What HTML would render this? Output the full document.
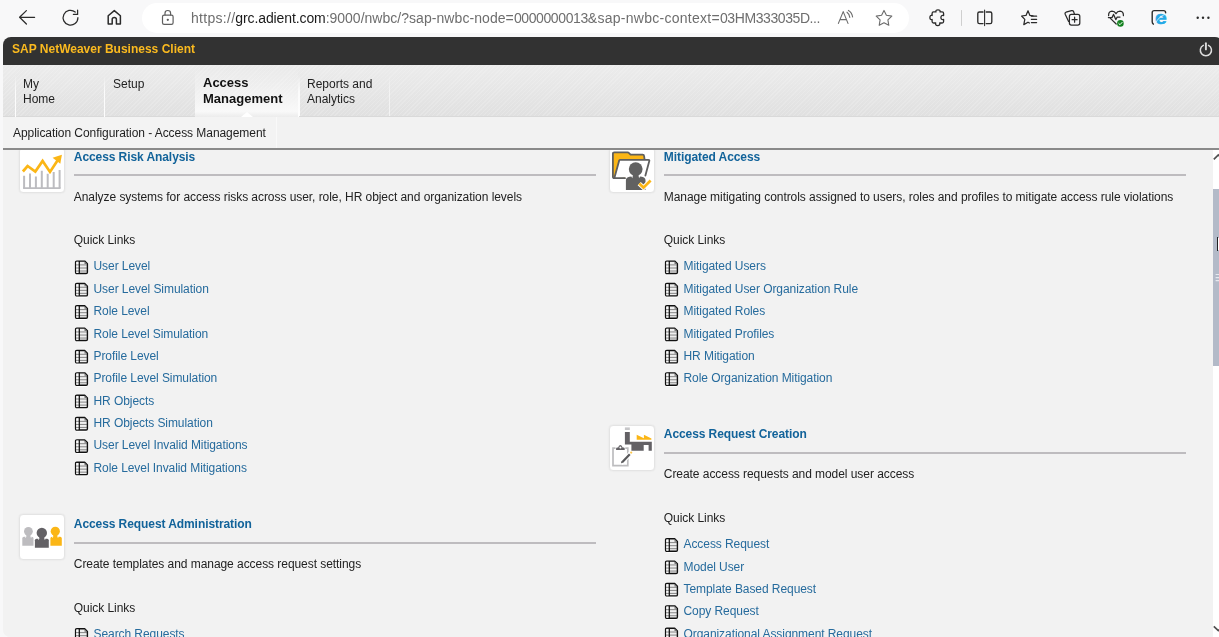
<!DOCTYPE html>
<html lang="en">
<head>
<meta charset="utf-8">
<title>SAP NetWeaver Business Client</title>
<style>
*{box-sizing:border-box;margin:0;padding:0}
html,body{width:1219px;height:637px;overflow:hidden}
body{-webkit-font-smoothing:antialiased;background:#f8f8f9;font-family:"Liberation Sans",Arial,sans-serif;font-size:12px;color:#222;position:relative}
.abs{position:absolute}
/* browser chrome */
#chrome{position:absolute;left:0;top:0;width:1219px;height:37px;background:#f8f8f9}
#pill{position:absolute;left:142px;top:3px;width:767px;height:30px;border-radius:15px;background:#fff}
#url{will-change:transform;position:absolute;left:190.9px;top:8.6px;font-size:14px;line-height:18px;color:#6e6e6e;white-space:nowrap;letter-spacing:0.015px}
#url b{font-weight:normal;color:#1b1b1b}
.tb{position:absolute;fill:none;stroke:#2a2a2a;stroke-width:1.4;stroke-linecap:round;stroke-linejoin:round}
/* page */
#page{position:absolute;left:3px;top:37px;width:1220px;height:600px;background:#f2f2f2;border-radius:8px 8px 0 7px;overflow:hidden}
#shell{position:absolute;left:0;top:0;width:1220px;height:28px;background:#323232}
#shell span{will-change:transform;position:absolute;left:9px;top:5px;font-weight:bold;font-size:12px;line-height:14px;color:#fbba1f;white-space:nowrap}
#tabs{position:absolute;left:0;top:28px;width:1220px;height:52px;background-color:#e6e6e6;
 background-image:repeating-linear-gradient(135deg,rgba(255,255,255,.16) 0,rgba(255,255,255,.16) 1px,rgba(255,255,255,0) 1px,rgba(255,255,255,0) 3px),linear-gradient(#ececec,#e0e0e0)}
.sep{position:absolute;top:10px;width:1px;height:42px;background:linear-gradient(rgba(255,255,255,0),rgba(255,255,255,.85) 40%,rgba(255,255,255,.95))}
.tab{will-change:transform;position:absolute;font-size:12px;line-height:14.6px;color:#222;white-space:nowrap}
#seltab{position:absolute;left:192px;top:4px;width:103px;height:48px;background:linear-gradient(rgba(255,255,255,0) 0,rgba(255,255,255,.45) 50%,#f9f9f9 88%,#ececec 100%)}
#notch{position:absolute;left:238px;top:47px;width:0;height:0;border-left:6px solid transparent;border-right:6px solid transparent;border-bottom:5px solid #fff}
#tabs:after{content:'';position:absolute;left:296px;right:0;bottom:0;height:1px;background:#d9d9d9}
#tabs:before{content:'';position:absolute;left:0;width:192px;bottom:0;height:1px;background:#d9d9d9}
#crumb{position:absolute;left:0;top:80px;width:1220px;height:31px;background:#f2f2f2}
#crumb .c{position:absolute;left:0;top:0;width:274px;height:31px;background:#f3f3f3;border-right:1px solid #f9f9f9}
#crumb span{will-change:transform;position:absolute;left:10px;top:9px;line-height:14px;white-space:nowrap;color:#1e1e1e;letter-spacing:-0.06px}
#rule{position:absolute;left:0;top:111px;width:1220px;height:2px;background:#8a8a8a}
#content{position:absolute;left:0;top:113px;width:1210px;height:487px;overflow:hidden;will-change:transform}
.ico{position:absolute;width:46px;height:46px;background:#fff;border:1px solid #e4e4e4;border-radius:4px;box-shadow:0 0 2px rgba(0,0,0,.08)}
.h{position:absolute;letter-spacing:-0.08px;font-weight:bold;font-size:12px;line-height:14px;color:#12639a;white-space:nowrap}
.hr{position:absolute;height:2px;background:#bebcbf;width:522px}
.d{position:absolute;letter-spacing:-0.055px;font-size:12px;line-height:14px;color:#222;white-space:nowrap}
.l{position:absolute;letter-spacing:-0.07px;font-size:12px;line-height:14px;color:#266b9d;white-space:nowrap}
.li{position:absolute;width:16px;height:18px}
#sb{position:absolute;left:1210px;top:113px;width:12px;height:487px;background:#fff}
#thumb{position:absolute;left:0;top:39px;width:12px;height:177px;background:#b3bac8}
</style>
</head>
<body>
<div id="chrome">
  <div id="pill"></div>
  <svg class="abs" style="left:0;top:0" width="1219" height="37" viewBox="0 0 1219 37" fill="none" stroke="#2b2b2b" stroke-width="1.25" stroke-linecap="round" stroke-linejoin="round">
    <!-- back -->
    <path d="M34.6 17.3H19.8M26.4 10.6L19.6 17.3L26.4 24"/>
    <!-- reload -->
    <path d="M77.9 17.7A7.4 7.4 0 1 1 75.2 12"/><path d="M77.6 10.2V14.4H73.4"/>
    <!-- home -->
    <path d="M108.2 24V15.8L114.3 10.6L120.4 15.8V24H116.4V19.2Q116.4 17.4 114.3 17.4Q112.2 17.4 112.2 19.2V24Z" stroke-width="1.5"/>
    <!-- lock -->
    <g stroke="#5f5f5f" stroke-width="1.2"><rect x="162.5" y="15.2" width="10.6" height="9.2" rx="1.6"/><path d="M165 15V13.2Q165 10.5 167.8 10.5Q170.6 10.5 170.6 13.2V15"/><circle cx="167.8" cy="19.8" r=".55" fill="#5f5f5f"/></g>
    <!-- read aloud -->
    <g stroke="#6c6c6c" stroke-width="1.1"><path d="M838.4 23.4L843.2 11.6L848 23.4M840 19.6H846.4"/><path d="M847 12.2Q849.4 13.8 849.8 17.4M848.4 10.4Q852 12.4 852.6 17"/></g>
    <!-- star -->
    <path d="M884 10.4L886.4 15.3L891.8 16.1L887.9 19.9L888.8 25.3L884 22.7L879.2 25.3L880.1 19.9L876.2 16.1L881.6 15.3Z" stroke="#6c6c6c" stroke-width="1.1"/>
    <!-- extensions puzzle -->
    <path d="M933.6 11.9H936Q935.3 9.9 938 9.9Q940.7 9.9 940 11.9H942.1Q943.6 11.9 943.6 13.4V15.5Q941 14.8 940.9 17.5Q941 20.2 943.6 19.5V21.5Q943.6 23 942.1 23H939.7Q940.4 25.6 937.7 25.6Q935 25.6 935.7 23H933.6Q932.1 23 932.1 21.5V19.5Q929.9 20.2 929.9 17.5Q929.9 14.8 932.1 15.5V13.4Q932.1 11.9 933.6 11.9Z" stroke-width="1.3"/>
    <path d="M961.5 10.5V25.5" stroke="#cfcfcf" stroke-width="1"/>
    <!-- split screen -->
    <path d="M983 12H979.4Q977.8 12 977.8 13.6V22Q977.8 23.6 979.4 23.6H983M986.2 12H990.2Q991.8 12 991.8 13.6V22Q991.8 23.6 990.2 23.6H986.2" stroke-width="1.35"/><path d="M984.6 10V25.6" stroke-width="1.1"/>
    <!-- favorites -->
    <path d="M1028 10.8L1029.9 15.4L1033 15.8M1028 10.8L1026 15.4L1021.6 16L1024.8 19.4L1023.8 24.6L1028 22.2L1029.4 23"/><path d="M1031.4 16.2H1036.6M1031.4 19.4H1036.6M1031.4 22.6H1036.6"/>
    <!-- collections -->
    <path d="M1068.6 21.4L1065.2 14.2Q1064.6 12.8 1066 12.2L1071.6 10.6Q1073 10.2 1073.6 11.6L1074.4 14"/><rect x="1069.4" y="14.4" width="10.4" height="10.6" rx="2"/><path d="M1074.6 17.2V22.2M1072.1 19.7H1077.1"/>
    <!-- heart pulse -->
    <path d="M1116.2 24L1110.4 18.4M1108.6 15.6Q1108.4 11.4 1112 11.2Q1114.6 11.2 1116 13.6Q1117.4 11.2 1120 11.2Q1123.6 11.4 1123.4 15.6"/><path d="M1108.4 17.6H1112L1113.6 14.4L1115.8 19.6L1117.2 17H1120"/>
    <circle cx="1120.4" cy="23.4" r="3.3" fill="#13811f" stroke="none"/><path d="M1118.8 23.5L1120 24.7L1122.1 22.4" stroke="#fff" stroke-width="1"/>
    <!-- IE mode -->
    <path d="M1153.4 24.2Q1152.2 23.4 1152.2 21.8V12.6Q1152.2 10.6 1154.2 10.6H1163.6Q1165.6 10.6 1165.6 12.6V13" stroke-width="1.4"/><text x="1155" y="24.2" font-family="Liberation Sans,sans-serif" font-size="17.6" font-weight="bold" fill="#25a9e6" stroke="#25a9e6" stroke-width=".5" textLength="11.8" lengthAdjust="spacingAndGlyphs">e</text><path d="M1155.6 23.6Q1157.2 17.4 1166.4 13.6" stroke="#d6f0fb" stroke-width=".9"/>
    <!-- dots -->
    <g fill="#2b2b2b" stroke="none"><circle cx="1197.7" cy="17.7" r="1.2"/><circle cx="1203" cy="17.7" r="1.2"/><circle cx="1208.4" cy="17.7" r="1.2"/></g>
  </svg>

  <div id="url"><span style="letter-spacing:0.29px">https://</span><b style="letter-spacing:-0.11px">grc.adient.com</b><span style="letter-spacing:0.00px">:9000/nwbc/</span><span style="letter-spacing:0.07px">?sap-nwbc-node=</span><span style="letter-spacing:-0.39px">0000000013</span><span style="letter-spacing:0.27px">&amp;sap-nwbc-context=</span><span style="letter-spacing:-0.41px">03HM333035D...</span></div>
</div>
<div id="page">
  <div id="shell"><span>SAP NetWeaver Business Client</span>
    <svg class="abs" style="left:1194px;top:4px" width="18" height="18" viewBox="0 0 18 18" fill="none" stroke="#dcdcdc" stroke-linecap="round"><path d="M6.3 4.3A5.6 5.6 0 1 0 11.5 4.3" stroke-width="1.5"/><path d="M8.9 2.2V8.4" stroke-width="1.9"/></svg></div>
  <div id="tabs">
    <div class="sep" style="left:12px"></div>
    <div class="sep" style="left:101px"></div>
    <div id="seltab"></div>
    <div class="sep" style="left:295px;width:2px"></div>
    <div id="notch"></div>
    <div class="sep" style="left:386px;opacity:.6"></div>
    <div class="tab" style="left:20px;top:12px">My<br>Home</div>
    <div class="tab" style="left:110px;top:12px">Setup</div>
    <div class="tab" style="left:200px;top:10px;font-weight:bold;font-size:13px;line-height:16px;color:#111">Access<br>Management</div>
    <div class="tab" style="left:304px;top:12px">Reports and<br>Analytics</div>
  </div>
  <div id="crumb"><div class="c"></div><span>Application Configuration - Access Management</span></div>
  <div id="rule"></div>
  <div id="content">
<div class="ico" style="left:16.3px;top:-3.2px"><svg class="abs" style="left:0;top:0" width="44" height="44" viewBox="1 1 44 44"><g stroke="#bcbcc0" stroke-width="2" fill="none"><path d="M5.1 41V28.8M11 41V26.4M16.9 41V29.6M22.8 41V23.7M28.7 41V26.8M34.7 41V24.9M40.6 41V22.9"/><path d="M4.1 41.2H41.6" stroke-width="1.8"/></g><path d="M3.9 24.5L8.6 19L16.3 24.5L23.6 13.9L31 24.9L38.5 13.4" fill="none" stroke="#fbb616" stroke-width="2.7" stroke-linejoin="miter"/><path d="M42.9 7.8L33.6 10.8L41.3 16.8Z" fill="#fbb616"/></svg></div>
<div class="h" style="left:70.8px;top:-0.5px">Access Risk Analysis</div>
<div class="hr" style="left:70.8px;top:24.2px"></div>
<div class="d" style="left:70.8px;top:39.6px">Analyze systems for access risks across user, role, HR object and organization levels</div>
<div class="d" style="left:70.8px;top:83.3px">Quick Links</div>
<svg class="li" style="left:71px;top:109px" viewBox="-0.40 -0.90 16 18"><path d="M2 14.9H12.4" stroke="#fff" stroke-width="1"/><path d="M2.4 1.2H10.3L13 3.9V12.4Q13 13.6 11.8 13.6H2.4Q1.2 13.6 1.2 12.4V2.4Q1.2 1.2 2.4 1.2Z" fill="#efefef" stroke="#111" stroke-width="1.4" stroke-linejoin="round"/><rect x="1.9" y="1.9" width="2.4" height="11.2" fill="#fafafa"/><path d="M10.1 1.4V4.1H12.8Z" fill="#777"/><path d="M1.6 5H12.6M1.6 8.1H12.6M1.6 11.1H12.6" stroke="#4a4a4a" stroke-width=".65"/><path d="M4.9 1.2V13.6" stroke="#111" stroke-width="1.25"/></svg>
<div class="l" style="left:90.5px;top:109.4px">User Level</div>
<svg class="li" style="left:71px;top:132px" viewBox="-0.40 -0.25 16 18"><path d="M2 14.9H12.4" stroke="#fff" stroke-width="1"/><path d="M2.4 1.2H10.3L13 3.9V12.4Q13 13.6 11.8 13.6H2.4Q1.2 13.6 1.2 12.4V2.4Q1.2 1.2 2.4 1.2Z" fill="#efefef" stroke="#111" stroke-width="1.4" stroke-linejoin="round"/><rect x="1.9" y="1.9" width="2.4" height="11.2" fill="#fafafa"/><path d="M10.1 1.4V4.1H12.8Z" fill="#777"/><path d="M1.6 5H12.6M1.6 8.1H12.6M1.6 11.1H12.6" stroke="#4a4a4a" stroke-width=".65"/><path d="M4.9 1.2V13.6" stroke="#111" stroke-width="1.25"/></svg>
<div class="l" style="left:90.5px;top:131.8px">User Level Simulation</div>
<svg class="li" style="left:71px;top:154px" viewBox="-0.40 -0.60 16 18"><path d="M2 14.9H12.4" stroke="#fff" stroke-width="1"/><path d="M2.4 1.2H10.3L13 3.9V12.4Q13 13.6 11.8 13.6H2.4Q1.2 13.6 1.2 12.4V2.4Q1.2 1.2 2.4 1.2Z" fill="#efefef" stroke="#111" stroke-width="1.4" stroke-linejoin="round"/><rect x="1.9" y="1.9" width="2.4" height="11.2" fill="#fafafa"/><path d="M10.1 1.4V4.1H12.8Z" fill="#777"/><path d="M1.6 5H12.6M1.6 8.1H12.6M1.6 11.1H12.6" stroke="#4a4a4a" stroke-width=".65"/><path d="M4.9 1.2V13.6" stroke="#111" stroke-width="1.25"/></svg>
<div class="l" style="left:90.5px;top:154.1px">Role Level</div>
<svg class="li" style="left:71px;top:176px" viewBox="-0.40 -0.95 16 18"><path d="M2 14.9H12.4" stroke="#fff" stroke-width="1"/><path d="M2.4 1.2H10.3L13 3.9V12.4Q13 13.6 11.8 13.6H2.4Q1.2 13.6 1.2 12.4V2.4Q1.2 1.2 2.4 1.2Z" fill="#efefef" stroke="#111" stroke-width="1.4" stroke-linejoin="round"/><rect x="1.9" y="1.9" width="2.4" height="11.2" fill="#fafafa"/><path d="M10.1 1.4V4.1H12.8Z" fill="#777"/><path d="M1.6 5H12.6M1.6 8.1H12.6M1.6 11.1H12.6" stroke="#4a4a4a" stroke-width=".65"/><path d="M4.9 1.2V13.6" stroke="#111" stroke-width="1.25"/></svg>
<div class="l" style="left:90.5px;top:176.5px">Role Level Simulation</div>
<svg class="li" style="left:71px;top:199px" viewBox="-0.40 -0.30 16 18"><path d="M2 14.9H12.4" stroke="#fff" stroke-width="1"/><path d="M2.4 1.2H10.3L13 3.9V12.4Q13 13.6 11.8 13.6H2.4Q1.2 13.6 1.2 12.4V2.4Q1.2 1.2 2.4 1.2Z" fill="#efefef" stroke="#111" stroke-width="1.4" stroke-linejoin="round"/><rect x="1.9" y="1.9" width="2.4" height="11.2" fill="#fafafa"/><path d="M10.1 1.4V4.1H12.8Z" fill="#777"/><path d="M1.6 5H12.6M1.6 8.1H12.6M1.6 11.1H12.6" stroke="#4a4a4a" stroke-width=".65"/><path d="M4.9 1.2V13.6" stroke="#111" stroke-width="1.25"/></svg>
<div class="l" style="left:90.5px;top:198.8px">Profile Level</div>
<svg class="li" style="left:71px;top:221px" viewBox="-0.40 -0.65 16 18"><path d="M2 14.9H12.4" stroke="#fff" stroke-width="1"/><path d="M2.4 1.2H10.3L13 3.9V12.4Q13 13.6 11.8 13.6H2.4Q1.2 13.6 1.2 12.4V2.4Q1.2 1.2 2.4 1.2Z" fill="#efefef" stroke="#111" stroke-width="1.4" stroke-linejoin="round"/><rect x="1.9" y="1.9" width="2.4" height="11.2" fill="#fafafa"/><path d="M10.1 1.4V4.1H12.8Z" fill="#777"/><path d="M1.6 5H12.6M1.6 8.1H12.6M1.6 11.1H12.6" stroke="#4a4a4a" stroke-width=".65"/><path d="M4.9 1.2V13.6" stroke="#111" stroke-width="1.25"/></svg>
<div class="l" style="left:90.5px;top:221.2px">Profile Level Simulation</div>
<svg class="li" style="left:71px;top:244px" viewBox="-0.40 -0.00 16 18"><path d="M2 14.9H12.4" stroke="#fff" stroke-width="1"/><path d="M2.4 1.2H10.3L13 3.9V12.4Q13 13.6 11.8 13.6H2.4Q1.2 13.6 1.2 12.4V2.4Q1.2 1.2 2.4 1.2Z" fill="#efefef" stroke="#111" stroke-width="1.4" stroke-linejoin="round"/><rect x="1.9" y="1.9" width="2.4" height="11.2" fill="#fafafa"/><path d="M10.1 1.4V4.1H12.8Z" fill="#777"/><path d="M1.6 5H12.6M1.6 8.1H12.6M1.6 11.1H12.6" stroke="#4a4a4a" stroke-width=".65"/><path d="M4.9 1.2V13.6" stroke="#111" stroke-width="1.25"/></svg>
<div class="l" style="left:90.5px;top:243.5px">HR Objects</div>
<svg class="li" style="left:71px;top:266px" viewBox="-0.40 -0.35 16 18"><path d="M2 14.9H12.4" stroke="#fff" stroke-width="1"/><path d="M2.4 1.2H10.3L13 3.9V12.4Q13 13.6 11.8 13.6H2.4Q1.2 13.6 1.2 12.4V2.4Q1.2 1.2 2.4 1.2Z" fill="#efefef" stroke="#111" stroke-width="1.4" stroke-linejoin="round"/><rect x="1.9" y="1.9" width="2.4" height="11.2" fill="#fafafa"/><path d="M10.1 1.4V4.1H12.8Z" fill="#777"/><path d="M1.6 5H12.6M1.6 8.1H12.6M1.6 11.1H12.6" stroke="#4a4a4a" stroke-width=".65"/><path d="M4.9 1.2V13.6" stroke="#111" stroke-width="1.25"/></svg>
<div class="l" style="left:90.5px;top:265.9px">HR Objects Simulation</div>
<svg class="li" style="left:71px;top:288px" viewBox="-0.40 -0.70 16 18"><path d="M2 14.9H12.4" stroke="#fff" stroke-width="1"/><path d="M2.4 1.2H10.3L13 3.9V12.4Q13 13.6 11.8 13.6H2.4Q1.2 13.6 1.2 12.4V2.4Q1.2 1.2 2.4 1.2Z" fill="#efefef" stroke="#111" stroke-width="1.4" stroke-linejoin="round"/><rect x="1.9" y="1.9" width="2.4" height="11.2" fill="#fafafa"/><path d="M10.1 1.4V4.1H12.8Z" fill="#777"/><path d="M1.6 5H12.6M1.6 8.1H12.6M1.6 11.1H12.6" stroke="#4a4a4a" stroke-width=".65"/><path d="M4.9 1.2V13.6" stroke="#111" stroke-width="1.25"/></svg>
<div class="l" style="left:90.5px;top:288.2px">User Level Invalid Mitigations</div>
<svg class="li" style="left:71px;top:311px" viewBox="-0.40 -0.05 16 18"><path d="M2 14.9H12.4" stroke="#fff" stroke-width="1"/><path d="M2.4 1.2H10.3L13 3.9V12.4Q13 13.6 11.8 13.6H2.4Q1.2 13.6 1.2 12.4V2.4Q1.2 1.2 2.4 1.2Z" fill="#efefef" stroke="#111" stroke-width="1.4" stroke-linejoin="round"/><rect x="1.9" y="1.9" width="2.4" height="11.2" fill="#fafafa"/><path d="M10.1 1.4V4.1H12.8Z" fill="#777"/><path d="M1.6 5H12.6M1.6 8.1H12.6M1.6 11.1H12.6" stroke="#4a4a4a" stroke-width=".65"/><path d="M4.9 1.2V13.6" stroke="#111" stroke-width="1.25"/></svg>
<div class="l" style="left:90.5px;top:310.6px">Role Level Invalid Mitigations</div>
<div class="ico" style="left:16.3px;top:364.4px"><svg class="abs" style="left:0;top:0" width="44" height="44" viewBox="1 1 44 44"><g fill="#bdbcbf"><circle cx="9.4" cy="17.3" r="4.4"/><rect x="7.3" y="17.3" width="4.2" height="6.5"/><path d="M3.3 31.8V24.4Q3.3 22.8 4.9 22.8H12.9Q14.5 22.8 14.5 24.4V31.8Z"/></g><path d="M5.7 22.6H7.3L6.8 24.1ZM11.5 22.6H13.1L12.0 24.1Z" fill="#fff"/><g fill="#fbb616"><circle cx="36.3" cy="17.3" r="4.6"/><rect x="34.2" y="17.3" width="4.2" height="6.5"/><path d="M31.4 31.8V24.4Q31.4 22.8 33.0 22.8H41.2Q42.8 22.8 42.8 24.4V31.8Z"/></g><path d="M32.6 22.6H34.2L33.7 24.1ZM38.4 22.6H40.0L38.9 24.1Z" fill="#fff"/><g fill="#636165"><circle cx="22.8" cy="18.9" r="5.2"/><rect x="20.3" y="18.9" width="5.0" height="6.8"/><path d="M15.9 33.8V26.3Q15.9 24.7 17.5 24.7H28.2Q29.8 24.7 29.8 26.3V33.8Z"/></g><path d="M18.7 24.5H20.3L19.8 26.0ZM25.3 24.5H26.9L25.8 26.0Z" fill="#fff"/></svg></div>
<div class="h" style="left:70.8px;top:367.2px">Access Request Administration</div>
<div class="hr" style="left:70.8px;top:391.9px"></div>
<div class="d" style="left:70.8px;top:407.3px">Create templates and manage access request settings</div>
<div class="d" style="left:70.8px;top:451.0px">Quick Links</div>
<svg class="li" style="left:71px;top:477px" viewBox="-0.40 -0.60 16 18"><path d="M2 14.9H12.4" stroke="#fff" stroke-width="1"/><path d="M2.4 1.2H10.3L13 3.9V12.4Q13 13.6 11.8 13.6H2.4Q1.2 13.6 1.2 12.4V2.4Q1.2 1.2 2.4 1.2Z" fill="#efefef" stroke="#111" stroke-width="1.4" stroke-linejoin="round"/><rect x="1.9" y="1.9" width="2.4" height="11.2" fill="#fafafa"/><path d="M10.1 1.4V4.1H12.8Z" fill="#777"/><path d="M1.6 5H12.6M1.6 8.1H12.6M1.6 11.1H12.6" stroke="#4a4a4a" stroke-width=".65"/><path d="M4.9 1.2V13.6" stroke="#111" stroke-width="1.25"/></svg>
<div class="l" style="left:90.5px;top:477.1px">Search Requests</div>
<div class="ico" style="left:606.3px;top:-3.2px"><svg class="abs" style="left:0;top:0" width="44" height="44" viewBox="1 1 44 44"><path d="M15.3 31.2H5.4Q3.9 31.2 3.9 29.7V6.8Q3.9 5.3 5.4 5.3H18.6Q19.3 5.3 19.8 5.9L21.6 7.6H33.6Q35 7.6 35.1 9L35.6 12.7" fill="#fbb616" stroke="#5f5f5f" stroke-width="1.8" stroke-linejoin="round"/><path d="M10.4 12.9H39.4Q40.6 12.9 40.3 14L36.2 29.2L5.3 31.2Z" fill="#fff"/><path d="M16 31.2H5.3L10.2 13.6Q10.4 12.8 11.3 12.8H39.3Q40.7 12.8 40.3 14.1L36.4 28.6" fill="none" stroke="#5f5f5f" stroke-width="1.8" stroke-linejoin="round" stroke-linecap="round"/><circle cx="26.7" cy="22.1" r="6.9" fill="#616161"/><path d="M16.9 42.9V33.6Q16.9 30.2 20.5 29.8L22.4 29.6L23.3 31.2L24.2 27H29.2L30.1 31.2L31 29.6L32.9 29.8Q36.5 30.2 36.5 33.6V42.9Z" fill="#616161"/><path d="M30.2 36.6L34.5 40.6L41.6 33.5" fill="none" stroke="#fff" stroke-width="4.6"/><path d="M30.2 36.6L34.5 40.6L41.6 33.5" fill="none" stroke="#fbb616" stroke-width="2.7"/></svg></div>
<div class="h" style="left:660.8px;top:-0.5px">Mitigated Access</div>
<div class="hr" style="left:660.8px;top:24.2px"></div>
<div class="d" style="left:660.8px;top:39.6px">Manage mitigating controls assigned to users, roles and profiles to mitigate access rule violations</div>
<div class="d" style="left:660.8px;top:83.3px">Quick Links</div>
<svg class="li" style="left:661px;top:109px" viewBox="-0.40 -0.90 16 18"><path d="M2 14.9H12.4" stroke="#fff" stroke-width="1"/><path d="M2.4 1.2H10.3L13 3.9V12.4Q13 13.6 11.8 13.6H2.4Q1.2 13.6 1.2 12.4V2.4Q1.2 1.2 2.4 1.2Z" fill="#efefef" stroke="#111" stroke-width="1.4" stroke-linejoin="round"/><rect x="1.9" y="1.9" width="2.4" height="11.2" fill="#fafafa"/><path d="M10.1 1.4V4.1H12.8Z" fill="#777"/><path d="M1.6 5H12.6M1.6 8.1H12.6M1.6 11.1H12.6" stroke="#4a4a4a" stroke-width=".65"/><path d="M4.9 1.2V13.6" stroke="#111" stroke-width="1.25"/></svg>
<div class="l" style="left:680.5px;top:109.4px">Mitigated Users</div>
<svg class="li" style="left:661px;top:132px" viewBox="-0.40 -0.25 16 18"><path d="M2 14.9H12.4" stroke="#fff" stroke-width="1"/><path d="M2.4 1.2H10.3L13 3.9V12.4Q13 13.6 11.8 13.6H2.4Q1.2 13.6 1.2 12.4V2.4Q1.2 1.2 2.4 1.2Z" fill="#efefef" stroke="#111" stroke-width="1.4" stroke-linejoin="round"/><rect x="1.9" y="1.9" width="2.4" height="11.2" fill="#fafafa"/><path d="M10.1 1.4V4.1H12.8Z" fill="#777"/><path d="M1.6 5H12.6M1.6 8.1H12.6M1.6 11.1H12.6" stroke="#4a4a4a" stroke-width=".65"/><path d="M4.9 1.2V13.6" stroke="#111" stroke-width="1.25"/></svg>
<div class="l" style="left:680.5px;top:131.8px">Mitigated User Organization Rule</div>
<svg class="li" style="left:661px;top:154px" viewBox="-0.40 -0.60 16 18"><path d="M2 14.9H12.4" stroke="#fff" stroke-width="1"/><path d="M2.4 1.2H10.3L13 3.9V12.4Q13 13.6 11.8 13.6H2.4Q1.2 13.6 1.2 12.4V2.4Q1.2 1.2 2.4 1.2Z" fill="#efefef" stroke="#111" stroke-width="1.4" stroke-linejoin="round"/><rect x="1.9" y="1.9" width="2.4" height="11.2" fill="#fafafa"/><path d="M10.1 1.4V4.1H12.8Z" fill="#777"/><path d="M1.6 5H12.6M1.6 8.1H12.6M1.6 11.1H12.6" stroke="#4a4a4a" stroke-width=".65"/><path d="M4.9 1.2V13.6" stroke="#111" stroke-width="1.25"/></svg>
<div class="l" style="left:680.5px;top:154.1px">Mitigated Roles</div>
<svg class="li" style="left:661px;top:176px" viewBox="-0.40 -0.95 16 18"><path d="M2 14.9H12.4" stroke="#fff" stroke-width="1"/><path d="M2.4 1.2H10.3L13 3.9V12.4Q13 13.6 11.8 13.6H2.4Q1.2 13.6 1.2 12.4V2.4Q1.2 1.2 2.4 1.2Z" fill="#efefef" stroke="#111" stroke-width="1.4" stroke-linejoin="round"/><rect x="1.9" y="1.9" width="2.4" height="11.2" fill="#fafafa"/><path d="M10.1 1.4V4.1H12.8Z" fill="#777"/><path d="M1.6 5H12.6M1.6 8.1H12.6M1.6 11.1H12.6" stroke="#4a4a4a" stroke-width=".65"/><path d="M4.9 1.2V13.6" stroke="#111" stroke-width="1.25"/></svg>
<div class="l" style="left:680.5px;top:176.5px">Mitigated Profiles</div>
<svg class="li" style="left:661px;top:199px" viewBox="-0.40 -0.30 16 18"><path d="M2 14.9H12.4" stroke="#fff" stroke-width="1"/><path d="M2.4 1.2H10.3L13 3.9V12.4Q13 13.6 11.8 13.6H2.4Q1.2 13.6 1.2 12.4V2.4Q1.2 1.2 2.4 1.2Z" fill="#efefef" stroke="#111" stroke-width="1.4" stroke-linejoin="round"/><rect x="1.9" y="1.9" width="2.4" height="11.2" fill="#fafafa"/><path d="M10.1 1.4V4.1H12.8Z" fill="#777"/><path d="M1.6 5H12.6M1.6 8.1H12.6M1.6 11.1H12.6" stroke="#4a4a4a" stroke-width=".65"/><path d="M4.9 1.2V13.6" stroke="#111" stroke-width="1.25"/></svg>
<div class="l" style="left:680.5px;top:198.8px">HR Mitigation</div>
<svg class="li" style="left:661px;top:221px" viewBox="-0.40 -0.65 16 18"><path d="M2 14.9H12.4" stroke="#fff" stroke-width="1"/><path d="M2.4 1.2H10.3L13 3.9V12.4Q13 13.6 11.8 13.6H2.4Q1.2 13.6 1.2 12.4V2.4Q1.2 1.2 2.4 1.2Z" fill="#efefef" stroke="#111" stroke-width="1.4" stroke-linejoin="round"/><rect x="1.9" y="1.9" width="2.4" height="11.2" fill="#fafafa"/><path d="M10.1 1.4V4.1H12.8Z" fill="#777"/><path d="M1.6 5H12.6M1.6 8.1H12.6M1.6 11.1H12.6" stroke="#4a4a4a" stroke-width=".65"/><path d="M4.9 1.2V13.6" stroke="#111" stroke-width="1.25"/></svg>
<div class="l" style="left:680.5px;top:221.2px">Role Organization Mitigation</div>
<div class="ico" style="left:606.3px;top:274.8px"><svg class="abs" style="left:0;top:0" width="44" height="44" viewBox="1 1 44 44"><rect x="15.9" y="2.4" width="4.9" height="2.6" fill="#c6c6c8"/><path d="M15.9 7H20.8V16.8H42.8V25.8H39.6V19.9H34.7V25.8H22.4V19.5H15.9Z" fill="#636165"/><path d="M27.7 14.8V9.7L34.9 13.2V9.7L42.4 13.6V14.8Z" fill="#fbb616"/><path d="M6.5 23.1H4V40.7H18.8V23.1H16.3" fill="#fff" stroke="#bdbdbf" stroke-width="1.7"/><path d="M7.1 25V23.6Q7.1 22.4 8.3 22.4H9.2Q9.6 19.9 11.4 19.9Q13.2 19.9 13.6 22.4H14.5Q15.7 22.4 15.7 23.6V25Z" fill="#636165"/><circle cx="11.4" cy="22.5" r="1" fill="#fff"/><path d="M22.6 27.2L12 38.4" stroke="#fff" stroke-width="4.4" fill="none"/><path d="M20.8 29.2L13.4 36.9" stroke="#58585a" stroke-width="2.2" fill="none"/><path d="M12.1 38.2L12.3 36L14.3 37.8Z" fill="#58585a"/><circle cx="22.2" cy="27.6" r="1.1" fill="#fbc64a"/></svg></div>
<div class="h" style="left:660.8px;top:277.2px">Access Request Creation</div>
<div class="hr" style="left:660.8px;top:301.9px"></div>
<div class="d" style="left:660.8px;top:317.3px">Create access requests and model user access</div>
<div class="d" style="left:660.8px;top:361.0px">Quick Links</div>
<svg class="li" style="left:661px;top:387px" viewBox="-0.40 -0.60 16 18"><path d="M2 14.9H12.4" stroke="#fff" stroke-width="1"/><path d="M2.4 1.2H10.3L13 3.9V12.4Q13 13.6 11.8 13.6H2.4Q1.2 13.6 1.2 12.4V2.4Q1.2 1.2 2.4 1.2Z" fill="#efefef" stroke="#111" stroke-width="1.4" stroke-linejoin="round"/><rect x="1.9" y="1.9" width="2.4" height="11.2" fill="#fafafa"/><path d="M10.1 1.4V4.1H12.8Z" fill="#777"/><path d="M1.6 5H12.6M1.6 8.1H12.6M1.6 11.1H12.6" stroke="#4a4a4a" stroke-width=".65"/><path d="M4.9 1.2V13.6" stroke="#111" stroke-width="1.25"/></svg>
<div class="l" style="left:680.5px;top:387.1px">Access Request</div>
<svg class="li" style="left:661px;top:409px" viewBox="-0.40 -0.95 16 18"><path d="M2 14.9H12.4" stroke="#fff" stroke-width="1"/><path d="M2.4 1.2H10.3L13 3.9V12.4Q13 13.6 11.8 13.6H2.4Q1.2 13.6 1.2 12.4V2.4Q1.2 1.2 2.4 1.2Z" fill="#efefef" stroke="#111" stroke-width="1.4" stroke-linejoin="round"/><rect x="1.9" y="1.9" width="2.4" height="11.2" fill="#fafafa"/><path d="M10.1 1.4V4.1H12.8Z" fill="#777"/><path d="M1.6 5H12.6M1.6 8.1H12.6M1.6 11.1H12.6" stroke="#4a4a4a" stroke-width=".65"/><path d="M4.9 1.2V13.6" stroke="#111" stroke-width="1.25"/></svg>
<div class="l" style="left:680.5px;top:409.5px">Model User</div>
<svg class="li" style="left:661px;top:432px" viewBox="-0.40 -0.30 16 18"><path d="M2 14.9H12.4" stroke="#fff" stroke-width="1"/><path d="M2.4 1.2H10.3L13 3.9V12.4Q13 13.6 11.8 13.6H2.4Q1.2 13.6 1.2 12.4V2.4Q1.2 1.2 2.4 1.2Z" fill="#efefef" stroke="#111" stroke-width="1.4" stroke-linejoin="round"/><rect x="1.9" y="1.9" width="2.4" height="11.2" fill="#fafafa"/><path d="M10.1 1.4V4.1H12.8Z" fill="#777"/><path d="M1.6 5H12.6M1.6 8.1H12.6M1.6 11.1H12.6" stroke="#4a4a4a" stroke-width=".65"/><path d="M4.9 1.2V13.6" stroke="#111" stroke-width="1.25"/></svg>
<div class="l" style="left:680.5px;top:431.8px">Template Based Request</div>
<svg class="li" style="left:661px;top:454px" viewBox="-0.40 -0.65 16 18"><path d="M2 14.9H12.4" stroke="#fff" stroke-width="1"/><path d="M2.4 1.2H10.3L13 3.9V12.4Q13 13.6 11.8 13.6H2.4Q1.2 13.6 1.2 12.4V2.4Q1.2 1.2 2.4 1.2Z" fill="#efefef" stroke="#111" stroke-width="1.4" stroke-linejoin="round"/><rect x="1.9" y="1.9" width="2.4" height="11.2" fill="#fafafa"/><path d="M10.1 1.4V4.1H12.8Z" fill="#777"/><path d="M1.6 5H12.6M1.6 8.1H12.6M1.6 11.1H12.6" stroke="#4a4a4a" stroke-width=".65"/><path d="M4.9 1.2V13.6" stroke="#111" stroke-width="1.25"/></svg>
<div class="l" style="left:680.5px;top:454.2px">Copy Request</div>
<svg class="li" style="left:661px;top:477px" viewBox="-0.40 -0.00 16 18"><path d="M2 14.9H12.4" stroke="#fff" stroke-width="1"/><path d="M2.4 1.2H10.3L13 3.9V12.4Q13 13.6 11.8 13.6H2.4Q1.2 13.6 1.2 12.4V2.4Q1.2 1.2 2.4 1.2Z" fill="#efefef" stroke="#111" stroke-width="1.4" stroke-linejoin="round"/><rect x="1.9" y="1.9" width="2.4" height="11.2" fill="#fafafa"/><path d="M10.1 1.4V4.1H12.8Z" fill="#777"/><path d="M1.6 5H12.6M1.6 8.1H12.6M1.6 11.1H12.6" stroke="#4a4a4a" stroke-width=".65"/><path d="M4.9 1.2V13.6" stroke="#111" stroke-width="1.25"/></svg>
<div class="l" style="left:680.5px;top:476.5px">Organizational Assignment Request</div>
  </div>
  <div id="sb"><div id="thumb"></div>
    <svg class="abs" style="left:0;top:0" width="12" height="487" viewBox="0 0 12 487" fill="none"><path d="M0.8 9.4L5.3 5L9.8 9.4" stroke="#4f4f4f" stroke-width="1.7"/><path d="M0.8 476.4L5.3 480.6L9.8 476.4" stroke="#4f4f4f" stroke-width="1.7"/><path d="M2.6 124.5H7M2.6 127.6H7M2.6 130.7H7" stroke="#e6e9ef" stroke-width="1.2"/><path d="M4.5 87V101" stroke="#222" stroke-width="1"/><path d="M5.5 88V100" stroke="#fff" stroke-width="1"/></svg></div>
</div>
</body>
</html>
